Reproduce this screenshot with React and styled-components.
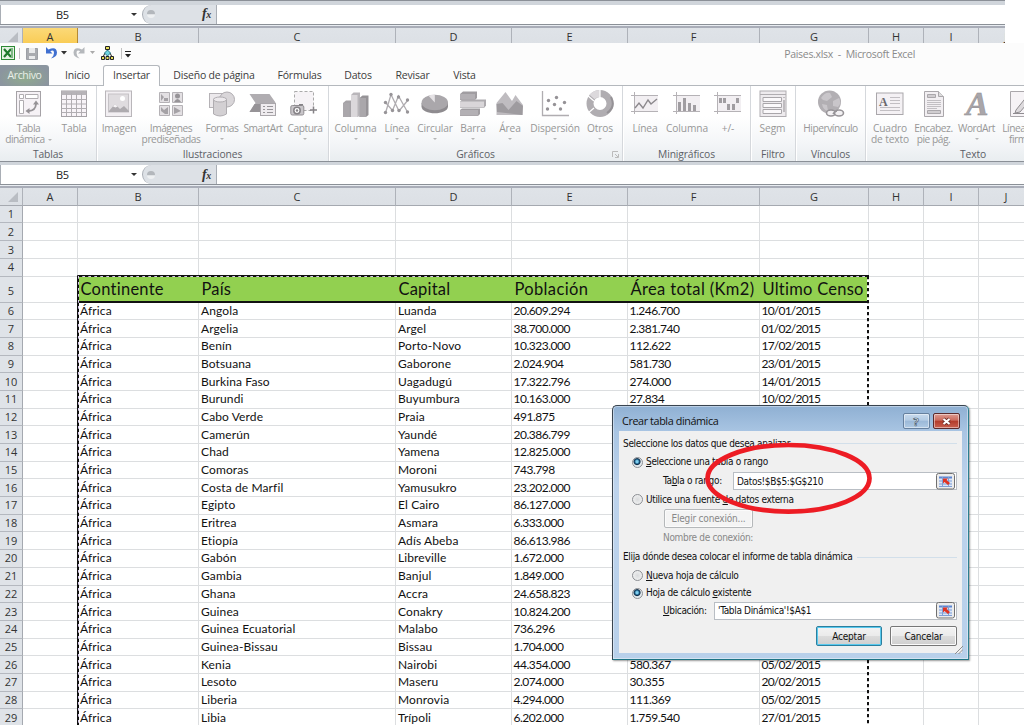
import React from "react";
import styled, {createGlobalStyle} from "styled-components";

const GlobalStyle = createGlobalStyle`
  body {
    margin: 0;
    background: #fff;
    font-family: "Open Sans", "Noto Sans", sans-serif;
  }
  * { box-sizing: border-box; }
`;

const Page = styled.div`
  position: relative;
  width: 1024px;
  height: 725px;
  overflow: hidden;
  background: #fff;
`;

/* ---------- formula bar ---------- */

const Strip = styled.div`
  width: ${props => props.w}px;
  height: 43px;
  overflow: hidden;
`;
const BarTop = styled.div`
  height: ${props => props.h}px;
  background: #d0d5db;
  border-top: 1px solid #8b9097;
`;
const Bar = styled.div`
  display: flex;
  height: 19px;
  background: #fff;
  border-left: 1px solid #a9aeb5;
`;
const BarBottom = styled.div`
  height: 4px;
  background: #e9edf2;
  border-top: 1px solid #8b9097;
  border-bottom: 2px solid #a9adb8;
`;
const NameBox = styled.div`
  display: flex;
  align-items: center;
  width: 141px;
  padding: 0 5px 0 55px;
  font-size: 11px;
  letter-spacing: -0.3px;
  color: #222;
  justify-content: space-between;
`;
const FxBox = styled.div`
  display: flex;
  align-items: center;
  justify-content: space-between;
  width: 75px;
  padding: 0 5px 0 4px;
  background: #dde1e6;
  border: 1px solid #a9aeb5;
  border-width: 0 1px 0 1px;
  border-radius: 10px 0 0 10px;
  font: italic bold 14px "Liberation Serif", serif;
  letter-spacing: -0.3px;
  color: #333;
  small { font-size: 10px; }
`;
const Knob = styled.i`
  width: 8px;
  height: 8px;
  border-radius: 50%;
  background: linear-gradient(#b3b7bc 45%, #eef0f2 60%);
`;
const Arrow = styled.i`
  width: 0;
  height: 0;
  border: ${props => props.s || 3}px solid transparent;
  border-top-color: ${props => props.c || "#333"};
  border-bottom: 0;
`;

/* ---------- ribbon ---------- */

const Ribbon = styled.div`
  height: 118px;
  background: #fcfcfc;
`;
const QuickBar = styled.div`
  display: flex;
  height: 22px;
  width: 915px;
  justify-content: space-between;
  svg { display: block; }
`;
const Title = styled.div`
  font-size: 10.5px;
  line-height: 22px;
  letter-spacing: -0.31px;
  white-space: pre;
  color: #8a8a8a;
`;
const Tabs = styled.div`
  display: flex;
  height: 21px;
  border-bottom: 1px solid #b4b8bd;
  font-size: 10.5px;
  line-height: 21px;
  letter-spacing: -0.2px;
  color: #3c3c3c;
`;
const Tab = styled.div`
  width: ${props => props.w}px;
  height: 21px;
  text-align: center;
  white-space: nowrap;
  ${props => props.active && `
    background: #fff;
    border: 1px solid #b4b8bd;
    border-bottom: 0;
    border-radius: 3px 3px 0 0;
    line-height: 19px;
  `}
  ${props => props.file && `
    background: radial-gradient(ellipse at 50% 60%, #8fa88f 10%, #8b959f 75%);
    border-radius: 0 3px 0 0;
    color: #e9efe9;
    margin-right: 3px;
    letter-spacing: -0.4px;
  `}
`;
const Groups = styled.div`
  display: flex;
  height: 76px;
  background: linear-gradient(#fff 40%, #f4f6f8 75%, #e9edf0);
  border-bottom: 1px solid #8b9097;
`;
const Group = styled.div`
  display: flex;
  flex-direction: column;
  flex: none;
  position: relative;
  width: ${props => props.w}px;
  border-right: 1px solid #d5d8dc;
  box-shadow: 1px 0 #fff;
`;
const Tools = styled.div`
  display: flex;
  height: 62px;
`;
const GroupLabel = styled.div`
  height: 14px;
  line-height: 14px;
  font-size: 10.3px;
  letter-spacing: -0.12px;
  text-align: center;
  color: #5c6066;
`;
const Tool = styled.div`
  display: flex;
  flex-direction: column;
  align-items: center;
  flex: none;
  width: ${props => props.w}px;
  padding-top: 4px;
  font-size: 10.2px;
  line-height: 11px;
  letter-spacing: ${props => props.tight ? -0.45 : -0.12}px;
  color: #979797;
  white-space: nowrap;
  svg { display: block; flex: none; margin-bottom: 5px; }
`;
const Caption = styled.span`
  display: flex;
  align-items: center;
  gap: 3px;
`;
const MenuArrow = styled(Arrow)`
  margin-top: 4px;
`;
const Launcher = styled.svg`
  position: absolute;
  right: 3px;
  bottom: 3px;
`;

/* ---------- sheet ---------- */

const Row = styled.div`
  display: flex;
  height: ${props => props.h}px;
`;
const ColHead = styled.div`
  flex: none;
  width: ${props => props.w}px;
  height: ${props => props.h || 18}px;
  background: ${props => props.hot ? "linear-gradient(#fbd978, #f9cb52)" : "linear-gradient(#dfe3e8, #dce0e5)"};
  border-right: 1px solid ${props => props.hot ? "#b58a35" : "#aeb2b9"};
  border-bottom: 1px solid #a5a9b0;
  font-size: 11px;
  line-height: 17px;
  text-align: center;
  color: #333;
`;
const Corner = styled(ColHead)`
  padding: 4px 0 0 8px;
`;
const RowHead = styled.div`
  display: flex;
  align-items: center;
  justify-content: center;
  flex: none;
  width: 23px;
  background: #dfe3e8;
  border-right: 1px solid #a5a9b0;
  border-bottom: 1px solid #b4b8bf;
  font-size: 11px;
  line-height: 14px;
  padding-top: ${props => props.pad || 0}px;
  color: #333;
`;
const spacing = {number: -0.48, date: -0.78};
const Cell = styled.div`
  display: flex;
  align-items: center;
  flex: none;
  width: ${props => props.w}px;
  padding-left: ${props => props.kind ? 1.5 : 2}px;
  border-right: 1px solid #dcdee0;
  border-bottom: 1px solid #dcdee0;
  font: 12px/16px Lato, sans-serif;
  letter-spacing: ${props => spacing[props.kind] || 0.12}px;
  white-space: nowrap;
  color: #111;
`;
const HeadCell = styled(Cell)`
  padding: 1px 0 0 2.5px;
  background: #92d050;
  border-right: 0;
  border-bottom: 2px solid #111;
  font-size: 16.5px;
  letter-spacing: ${props => props.ls || 0}px;
`;
/* the moving border of the copied range, it lies over the cells */
const Ants = styled.svg`
  position: absolute;
  left: 76px;
  top: 274px;
`;

/* ---------- dialog ---------- */

const Dialog = styled.div`
  position: absolute;
  left: 612px;
  top: 405px;
  width: 357px;
  height: 255px;
  padding: 0 6px 6px;
  background: linear-gradient(#8fb0d3, #a9c5e3 26px, #bdd3ec 80px, #b8d0ea);
  border: 1px solid #39444f;
  border-bottom-color: #1c7484;
  border-right-color: #2b7f90;
  border-radius: 5px 5px 0 0;
  font: 10px/14px "DejaVu Sans Condensed", "DejaVu Sans", sans-serif;
  font-stretch: condensed;
  letter-spacing: -0.33px;
  color: #111;
  box-shadow: inset 0 0 0 1px #ffffff66, 1px 1px 2px #0006;
`;
const TitleBar = styled.div`
  display: flex;
  height: 25px;
  padding: 7px 2px 0 3px;
  gap: 3px;
  font: 10.8px/16px "Open Sans", sans-serif;
  letter-spacing: -0.4px;
  span { flex: 1; }
`;
const WinButton = styled.div`
  display: flex;
  align-items: center;
  justify-content: center;
  width: 27px;
  height: 16px;
  border: 1px solid ${props => props.close ? "#5b2a2c" : "#66809e"};
  border-radius: 2px;
  background: ${props => props.close
    ? "linear-gradient(#dc9b92, #cb6a5c 45%, #b33a2a 50%, #c9604f)"
    : "linear-gradient(#c8daed, #b3cbe4 45%, #9bb9d8 50%, #b0cae4)"};
  box-shadow: inset 0 0 0 1px #ffffff77;
`;
const Body = styled.div`
  height: 222px;
  padding: 4px 5px 0 4px;
  background: #f0f0f0;
`;
const Line = styled.div`
  display: flex;
  align-items: center;
  height: ${props => props.h}px;
  padding-left: ${props => props.pad || 0}px;
  white-space: nowrap;
  color: ${props => props.off ? "#888" : "#111"};
  u { text-underline-offset: 1px; }
`;
const Rule = styled.i`
  flex: 1;
  height: 1px;
  margin-left: 5px;
  background: #d2dfea;
`;
const Radio = styled.i`
  width: 11px;
  height: 11px;
  margin-right: 3px;
  border: 1px solid #8c8f94;
  border-radius: 50%;
  background: ${props => props.on
    ? "radial-gradient(circle at 45% 40%, #7fd0f0 0 1px, #17557f 2.4px, #0e2c46 3px, #e4eaee 4px)"
    : "radial-gradient(#d9dbdd, #f6f6f6)"};
`;
const Field = styled.div`
  display: flex;
  align-items: center;
  justify-content: space-between;
  width: ${props => props.w}px;
  height: 18px;
  margin-left: auto;
  padding: 1px 0 0 3px;
  background: #fff;
  border: 1px solid #b9bec4;
  svg { margin-top: -1px; }
`;
const Button = styled.div`
  width: ${props => props.w}px;
  height: ${props => props.h || 20}px;
  border: 1px solid ${props => props.off ? "#b5b8ba" : props.primary ? "#2c7f9e" : "#777"};
  border-radius: 2px;
  background: ${props => props.off ? "#f4f4f4" : "linear-gradient(#f3f3f3, #ebebeb 48%, #dcdcdc 50%, #cfcfcf)"};
  box-shadow: inset 0 0 0 1px ${props => props.primary ? "#58c9ee" : "#fbfbfb"};
  line-height: ${props => (props.h || 21) - 2}px;
  letter-spacing: -0.2px;
  text-align: center;
`;
const Buttons = styled.div`
  display: flex;
  justify-content: flex-end;
  gap: 8px;
  padding-top: 6px;
`;
const Grip = styled.svg`
  position: absolute;
  right: 5px;
  bottom: 5px;
`;
const Mark = styled.svg`
  position: absolute;
  left: 700px;
  top: 438px;
`;

/* ---------- data ---------- */

const columns = [
  ["A", 55], ["B", 121], ["C", 197], ["D", 116], ["E", 116],
  ["F", 132], ["G", 109], ["H", 55], ["I", 55], ["J", 55],
];

const titles = [
  ["Continente", 0.25], ["País", 0.15], ["Capital", 0.2], ["Población", 0.35],
  ["Área total (Km2)", 0.36], ["Ultimo Censo", 0.25],
];

const countries = [
  ["Angola", "Luanda", "20.609.294", "1.246.700", "10/01/2015"],
  ["Argelia", "Argel", "38.700.000", "2.381.740", "01/02/2015"],
  ["Benín", "Porto-Novo", "10.323.000", "112.622", "17/02/2015"],
  ["Botsuana", "Gaborone", "2.024.904", "581.730", "23/01/2015"],
  ["Burkina Faso", "Uagadugú", "17.322.796", "274.000", "14/01/2015"],
  ["Burundi", "Buyumbura", "10.163.000", "27.834", "10/02/2015"],
  ["Cabo Verde", "Praia", "491.875", "", ""],
  ["Camerún", "Yaundé", "20.386.799", "", ""],
  ["Chad", "Yamena", "12.825.000", "", ""],
  ["Comoras", "Moroni", "743.798", "", ""],
  ["Costa de Marfil", "Yamusukro", "23.202.000", "", ""],
  ["Egipto", "El Cairo", "86.127.000", "", ""],
  ["Eritrea", "Asmara", "6.333.000", "", ""],
  ["Etiopía", "Adís Abeba", "86.613.986", "", ""],
  ["Gabón", "Libreville", "1.672.000", "", ""],
  ["Gambia", "Banjul", "1.849.000", "", ""],
  ["Ghana", "Accra", "24.658.823", "", ""],
  ["Guinea", "Conakry", "10.824.200", "", ""],
  ["Guinea Ecuatorial", "Malabo", "736.296", "", ""],
  ["Guinea-Bissau", "Bissau", "1.704.000", "", ""],
  ["Kenia", "Nairobi", "44.354.000", "580.367", "05/02/2015"],
  ["Lesoto", "Maseru", "2.074.000", "30.355", "20/02/2015"],
  ["Liberia", "Monrovia", "4.294.000", "111.369", "05/02/2015"],
  ["Libia", "Trípoli", "6.202.000", "1.759.540", "27/01/2015"],
];
const kinds = [null, null, "number", "number", "date"];

/* ---------- icons, all on a 30x28 box ---------- */

const icons = {
  pivot: <>
    <rect x="2.5" y="1.5" width="24" height="24.5" fill="#f6f2f6" stroke="#a5a2a6"/>
    <path d="M5.500 4.500h4v4h-4zM11.500 4.500h12.500v4H11.500zM5.500 10.500h4v13h-4z" fill="#fff" stroke="#b0adb1"/>
    <path d="M14.500 21q7 0 7.500-7" fill="none" stroke="#959296" strokeWidth="1.800"/>
    <path d="M19 14.500l3-4 3 4zM15.500 18l-4 3 4 3z" fill="#959296"/>
  </>,
  table: <>
    <rect x="2.500" y="1" width="25" height="25.500" fill="#f8f4f8" stroke="#a5a2a6"/>
    <path d="M2.500 1h25v4h-25z" fill="#b7b4b8"/>
    <path d="M2.500 9.500h25M2.500 14h25M2.500 18.500h25M2.500 22.500h25M7.500 3v23M12.500 3v23M17.500 3v23M22.500 3v23" stroke="#b1aeb2" fill="none"/>
  </>,
  image: <>
    <rect x="1.500" y="1" width="26" height="25.500" fill="#f2eff2" stroke="#b9b6ba"/>
    <rect x="4.500" y="4" width="20" height="18" fill="#dfdcdf" stroke="#c5c2c6"/>
    <path d="M5 21l6-7 5 5 4-3 5 5v1H5z" fill="#aeabaf"/>
    <path d="M9 16.500l2-2.500 2.500 2.500-2 1z" fill="#f5f3f5"/>
    <circle cx="18.500" cy="8.500" r="2.500" fill="#fff"/>
  </>,
  clips: <>
    <path d="M3.500 2.500h10v10h-10zM16.500 2.500h10v10h-10zM3.500 15.500h10v10h-10zM16.500 15.500h10v10h-10z" fill="#e3e0e3" stroke="#b5b2b6"/>
    <path d="M5 4l3 3-3 4zM8 8h4v3H8zM5 17l3 3 4-3v7H9l-4-3zM18 17l7 4-7 3z" fill="#a5a2a6"/>
    <circle cx="21.500" cy="6" r="2.500" fill="#979498"/>
    <path d="M18 12q3.500-6 7 0z" fill="#979498"/>
  </>,
  shapes: <>
    <rect x="2.500" y="3.500" width="16" height="14" fill="#ece9ec" stroke="#b5b2b6"/>
    <circle cx="20" cy="9.500" r="7.500" fill="#d9d6d9" stroke="#b0adb1"/>
    <path d="M6.500 9v15q6.500 4 13 0V9z" fill="#d3d0d3" stroke="#b0adb1"/>
    <ellipse cx="13" cy="9.500" rx="6.500" ry="2.500" fill="#ece9ec" stroke="#b0adb1"/>
  </>,
  smart: <>
    <path d="M1.500 4h20l6 8.500-5 9.500H1.500l6-9z" fill="#b0adb1"/>
    <path d="M1.500 22l5-8h16l-5 8z" fill="#969397"/>
    <rect x="12.500" y="13.500" width="15" height="12" fill="#efecef" stroke="#aaa7ab"/>
    <path d="M15 16.500h2m2 0h6M15 19.500h2m2 0h6M15 22.500h2m2 0h6" stroke="#989599"/>
  </>,
  capture: <>
    <rect x="4.500" y="1.500" width="19" height="19" fill="#f6f3f6" stroke="#aaa" strokeDasharray="3 2"/>
    <path d="M23.500 16.500v7M20 20h7" stroke="#858286" strokeWidth="1.500"/>
    <rect x=".8" y="15.500" width="13" height="9.500" rx="1.500" fill="#c9c6ca" stroke="#918e92"/>
    <circle cx="7" cy="20.500" r="3.200" fill="#fff" stroke="#858286" strokeWidth="1.500"/>
    <circle cx="7" cy="20.500" r="1.200" fill="#858286"/>
    <path d="M9 14h4v1.500H9z" fill="#858286"/>
  </>,
  column: <>
    <path d="M2 13l3-2.500h7V27H2z" fill="#a5a2a6"/>
    <path d="M18.500 8l3-2.500h6V25l-2.500 2h-6.500z" fill="#969397"/>
    <path d="M10 5l2.500-2.500h6.500V25l-2 2h-7z" fill="#b9b6ba"/>
    <path d="M10 5h6.500v22H10z" fill="#dbd8db"/>
    <path d="M2 13h6.500v14H2zM18.500 8H25v19h-6.500z" fill="#aaa7ab"/>
  </>,
  line: <>
    <path d="M3.500 23L9 4.500 17 21l9-11M3.500 12.500l7 8L16.500 6l9 16" stroke="#b0adb1" strokeWidth="1.300" fill="none"/>
    <g fill="#979498">
      <circle cx="3.500" cy="22.500" r="1.700"/><circle cx="9" cy="4.500" r="1.700"/><circle cx="17" cy="20.500" r="1.700"/><circle cx="25.500" cy="10" r="1.700"/>
      <circle cx="3.500" cy="12.500" r="1.700"/><circle cx="10.500" cy="20.500" r="1.700"/><circle cx="16.500" cy="7" r="1.700"/><circle cx="25.500" cy="22" r="1.700"/>
    </g>
  </>,
  pie: <>
    <path d="M1.500 13v3.500c0 9 26.500 9 26.500 0V13z" fill="#8e8b8f"/>
    <ellipse cx="14.800" cy="12.500" rx="13.200" ry="7.800" fill="#aaa7ab"/>
    <path d="M14.800 12.500L8.500 5.800q3-1.200 6.300-1.200z" fill="#e5e2e5"/>
  </>,
  bar: <>
    <path d="M2 4l3-2.500h14V8l-2 2H2zM2 20l2-1.500h18V24l-2 2H2z" fill="#a09da1"/>
    <path d="M2 11.500l2-2h24v6L26 18H2z" fill="#aeabaf"/>
    <path d="M2 4h15v5.500H2zM2 20h18v5.500H2z" fill="#b3b0b4"/>
    <path d="M2 11.500h24v6H2z" fill="#d9d6d9"/>
  </>,
  area: <>
    <path d="M1.500 13L10.500 2l6.500 9 3.500-6 7.500 10v10H1.500z" fill="#bfbcc0"/>
    <path d="M1.500 14l6-1 6 7 8-9 6.500 5-1 9L2 22z" fill="#9e9b9f"/>
  </>,
  scatter: <>
    <path d="M2.500 1v24.500H29" stroke="#b0adb1" strokeWidth="1.300" fill="none"/>
    <g fill="#959296">
      <circle cx="8.500" cy="10.500" r="1.700"/><circle cx="16.500" cy="7.500" r="1.700"/><circle cx="24.500" cy="12.500" r="1.700"/>
      <circle cx="7.500" cy="19" r="1.700"/><circle cx="14.500" cy="14.500" r="1.700"/><circle cx="20.500" cy="19" r="1.700"/>
    </g>
  </>,
  donut: <>
    <circle cx="15" cy="13.500" r="10" fill="none" stroke="#b0adb1" strokeWidth="7"/>
    <path d="M7 7q3-3.500 8-3.500" fill="none" stroke="#dcd9dc" strokeWidth="7"/>
    <path d="M15 0v8M2 5l7 6M2 24l7-6" stroke="#fff" strokeWidth="1.200"/>
    <path d="M26 7q5 10-4 16" fill="none" stroke="#959296" strokeWidth="2"/>
  </>,
  sparkLine: <>
    <path d="M4 6h24v15H4z" fill="#f2eff2"/>
    <path d="M1 5.500h27M1 21.500h27M4.500 2v22" stroke="#b5b2b6"/>
    <path d="M5 18l4-5 4 5 5-8 3 4 6-5" fill="none" stroke="#8b888c" strokeWidth="1.400"/>
  </>,
  sparkBar: <>
    <path d="M4 6h24v15H4z" fill="#f2eff2"/>
    <path d="M1 5.500h27M1 21.500h27M4.500 2v22" stroke="#b5b2b6"/>
    <path d="M6 12h3v9H6zM11 8h3v13h-3zM16 13h3v8h-3zM21 15h3v6h-3z" fill="#a09da1"/>
  </>,
  sparkWin: <>
    <path d="M4 6h24v15H4z" fill="#f2eff2"/>
    <path d="M1 5.500h27M1 21.500h27M4.500 2v22" stroke="#b5b2b6"/>
    <path d="M6 8h3v5H6zM10 8h3v5h-3zM14 14h3v6h-3zM19 14h3v6h-3zM23 8h3v5h-3z" fill="#a09da1"/>
  </>,
  slicer: <>
    <rect x="2" y="1" width="26" height="25.500" fill="#eeebee" stroke="#b0adb1"/>
    <path d="M2 4.500h26" stroke="#b0adb1"/>
    <path d="M5 7.500h18.500v4H5zM5 13.500h18.500v4H5zM5 19.500h18.500v4H5z" fill="#fbf9fb" stroke="#a9a6aa"/>
    <path d="M26 7v1m0 2v12" stroke="#8f8c90"/>
  </>,
  link: <>
    <circle cx="13.500" cy="12" r="11.500" fill="#b2afb3"/>
    <path d="M5 8q4-6 9-5l2 4-5 4-4-1zM17 11l6-3q3 5-1 9l-5-1zM6 14l5 1 1 6q-5-1-6-7z" fill="#c9c6ca"/>
    <ellipse cx="15" cy="23" rx="4.500" ry="3" fill="#f3f1f3" stroke="#979498" strokeWidth="1.600"/>
    <ellipse cx="23" cy="23" rx="4.500" ry="3" fill="#f3f1f3" stroke="#979498" strokeWidth="1.600"/>
    <path d="M17 24q2-3 4-3" stroke="#979498" strokeWidth="1.600" fill="none"/>
  </>,
  textBox: <>
    <rect x="1.500" y="3" width="26.500" height="21.500" fill="#f4f1f4" stroke="#aaa7ab"/>
    <text x="4" y="16" fontFamily="Liberation Serif" fontWeight="bold" fontSize="12" fill="#6b686c">A</text>
    <path d="M15 7.500h10M15 10.500h10M15 13.500h10M5 17.500h20M5 20.500h20" stroke="#c2bfc3"/>
  </>,
  header: <>
    <path d="M5.500 1.500h14l5 5v20h-19z" fill="#f2eff2" stroke="#aaa7ab"/>
    <path d="M19.500 1.500v5h5" fill="#ddd" stroke="#aaa7ab"/>
    <path d="M8.500 4.500h8v3h-8zM8.500 20.500h13v3h-13z" fill="#d0cdd0" stroke="#aaa7ab"/>
    <path d="M8 10.500h14M8 12.500h14M8 14.500h14M8 16.500h14M8 18.500h10" stroke="#c2bfc3"/>
  </>,
  wordArt: <text x="4" y="25" fontFamily="Liberation Serif" fontStyle="italic" fontWeight="bold" fontSize="33" textLength="22" lengthAdjust="spacingAndGlyphs" fill="#a9a6aa" stroke="#8d8a8e" strokeWidth=".5">A</text>,
  sign: <>
    <path d="M4.500 1.500h16l5 5v20h-21z" fill="#f6f3f6" stroke="#aaa7ab"/>
    <path d="M10 20L22 5l4 3-12 14-5 1z" fill="#dddadd" stroke="#8f8c90"/>
    <path d="M7 23.500h15" stroke="#8f8c90"/>
  </>,
};

const groups = [
  ["Tablas", 97, [[57, "pivot", "Tabla", "dinámica", true], [34, "table", "Tabla"]]],
  ["Ilustraciones", 232, [
    [44, "image", "Imagen"], [60, "clips", "Imágenes", "prediseñadas"],
    [42, "shapes", "Formas", null, true], [40, "smart", "SmartArt"], [44, "capture", "Captura", null, true],
  ]],
  ["Gráficos", 294, [
    [53, "column", "Columna", null, true], [30, "line", "Línea", null, true], [46, "pie", "Circular", null, true],
    [30, "bar", "Barra", null, true], [44, "area", "Área", null, true],
    [46, "scatter", "Dispersión", null, true], [44, "donut", "Otros", null, true],
  ]],
  ["Minigráficos", 128, [[44, "sparkLine", "Línea"], [40, "sparkBar", "Columna"], [42, "sparkWin", "+/-"]]],
  ["Filtro", 45, [[43, "slicer", "Segm"]]],
  ["Vínculos", 70, [[69, "link", "Hipervínculo"]]],
  ["Texto", 215, [
    [48, "textBox", "Cuadro", "de texto"], [39, "header", "Encabez.", "pie pág."],
    [47, "wordArt", "WordArt", null, true], [41, "sign", "Línea de", "firma"],
  ]],
];
const tightTools = ["pivot", "clips", "smart", "capture", "link", "header", "wordArt", "sign", "shapes"];

const tabs = [
  ["Inicio", 51], ["Insertar", 57], ["Diseño de página", 108], ["Fórmulas", 63],
  ["Datos", 54], ["Revisar", 55], ["Vista", 49],
];

const FormulaBar = ({top}) => (
  <>
    <BarTop h={top}/>
    <Bar>
      <NameBox>B5<Arrow/></NameBox>
      <FxBox><Knob/><span>f<small>x</small></span></FxBox>
    </Bar>
    <BarBottom/>
  </>
);

const Columns = ({hot}) => (
  <Row h={18}>
    <Corner w={23}>
      <svg width="10" height="10" style={{display: "block"}}><path d="M10 0v10H0z" fill="#b9bdc3"/></svg>
    </Corner>
    {columns.map(([name, w]) => <ColHead key={name} w={w} hot={name === hot}>{name}</ColHead>)}
  </Row>
);

const QuickIcons = () => (
  <svg width="140" height="22">
    <rect x="1.500" y="3.500" width="13" height="13" fill="#e6f2e4" stroke="#2c8a35"/>
    <path d="M4 6l7 8M11 6l-7 8" stroke="#1f7a2c" strokeWidth="2.200"/>
    <path d="M12 5v10" stroke="#7db884" strokeWidth="2"/>
    <path d="M19.500 5v11M121.500 5v11" stroke="#c2c2c2"/>
    <path d="M26.500 5.500h11v11h-11z" fill="#a9abb0" stroke="#9c9fa5"/>
    <path d="M29 5h6v5h-6zM29 13h6v3h-6z" fill="#e9eaec"/>
    <path d="M46 4v6.500h6.500l-2.200-2.200q3.700-2 3.700 1.700 0 3-3 5.500 6-1.500 6-6-.5-6.500-8.500-3z" fill="#3f6fd0"/>
    <path d="M61 8h6l-3 3.500z" fill="#333"/>
    <path d="M84.500 4v6.500H78l2.200-2.200q-3.700-2-3.700 1.700 0 3 3 5.500-6-1.500-6-6 .5-6.500 8.500-3z" fill="#b5b8bc"/>
    <path d="M90 8h5l-2.500 3z" fill="#aaa"/>
    <path d="M107.500 6v4M105 10l-2 4M110 10l2 4" stroke="#222"/>
    <path d="M105.500 3.500h4v3h-4zM101.500 13.500h3v3h-3zM106 13.500h3v3h-3zM110.500 13.500h3v3h-3z" fill="#e7e05a" stroke="#222"/>
    <path d="M107.500 7l3 3-3 3-3-3z" fill="#6fd4e2" stroke="#278"/>
    <path d="M125 8.500h6" stroke="#222"/><path d="M125 11h6l-3 3.500z" fill="#222"/>
  </svg>
);

const RangeIcon = () => (
  <svg width="20" height="17">
    <rect x=".5" y=".5" width="18" height="15.500" rx="2" fill="#ececec" stroke="#707070"/>
    <path d="M3 3.500h13v10H3z" fill="#dce6f6"/>
    <path d="M3 3.500h13v2H3z" fill="#5f86cf"/>
    <path d="M3 8h13M3 11h13M3 13.500h13M6.500 4v10M12.500 4v10" stroke="#7f9fd6"/>
    <path d="M7 5.500h5l-1.500 1.500 3.500 3-2 2-3.500-3L7 10.500z" fill="#e03222"/>
  </svg>
);

const PivotDialog = () => (
  <Dialog>
    <TitleBar>
      <span>Crear tabla dinámica</span>
      <WinButton>
        <svg width="9" height="11"><text x="1.500" y="9.500" fontFamily="Open Sans" fontWeight="bold" fontSize="11" fill="#fff" stroke="#455a70" strokeWidth=".7">?</text></svg>
      </WinButton>
      <WinButton close>
        <svg width="11" height="9"><path d="M2.500 2l6 5M8.500 2l-6 5" stroke="#6b2a26" strokeWidth="3.600"/><path d="M2.500 2l6 5M8.500 2l-6 5" stroke="#fff" strokeWidth="2.200"/></svg>
      </WinButton>
    </TitleBar>
    <Body>
      <Line h={17}>Seleccione los datos que desea analizar<Rule/></Line>
      <Line h={20} pad={9}><Radio on/><span><u>S</u>eleccione una tabla o rango</span></Line>
      <Line h={18} pad={40}><span>Ta<u>b</u>la o rango:</span><Field w={224}>Datos!$B$5:$G$210<RangeIcon/></Field></Line>
      <Line h={19} pad={9}><Radio/><span>Utilice una fuente <u>d</u>e datos externa</span></Line>
      <Line h={19} pad={41} off><Button w={89} h={19} off>Elegir conexión...</Button></Line>
      <Line h={20} pad={40} off>Nombre de conexión:</Line>
      <Line h={18}>Elija dónde desea colocar el informe de tabla dinámica<Rule/></Line>
      <Line h={19} pad={9}><Radio/><span><u>N</u>ueva hoja de cálculo</span></Line>
      <Line h={16} pad={9}><Radio on/><span>Hoja de cálculo <u>e</u>xistente</span></Line>
      <Line h={19} pad={40}><span><u>U</u>bicación:</span><Field w={243}>'Tabla Dinámica'!$A$1<RangeIcon/></Field></Line>
      <Buttons>
        <Button w={66} primary>Aceptar</Button>
        <Button w={67}>Cancelar</Button>
      </Buttons>
    </Body>
    <Grip width="9" height="9"><path d="M1 9l8-8M4.500 9L9 4.500" stroke="#8d8d8d"/></Grip>
  </Dialog>
);

const App = () => {
  const widths = columns.map(c => c[1]);
  return (
    <Page>
      <GlobalStyle/>
      <Strip w={1005}>
        <FormulaBar top={4.5}/>
        <Columns hot="A"/>
      </Strip>
      <Ribbon>
        <QuickBar>
          <QuickIcons/>
          <Title>Paises.xlsx  -  Microsoft Excel</Title>
        </QuickBar>
        <Tabs>
          <Tab w={49} file>Archivo</Tab>
          {tabs.map(([name, w]) => <Tab key={name} w={w} active={name === "Insertar"}>{name}</Tab>)}
        </Tabs>
        <Groups>
          {groups.map(([label, w, tools]) => (
            <Group key={label} w={w}>
              <Tools>
                {tools.map(([tw, icon, a, b, menu]) => (
                  <Tool key={icon} w={tw} tight={tightTools.includes(icon)}>
                    <svg width="30" height="28">{icons[icon]}</svg>
                    {a}
                    {b && <Caption>{b}{menu && <Arrow s={2.5} c="#b5b5b5"/>}</Caption>}
                    {!b && menu && <MenuArrow s={2.5} c="#b5b5b5"/>}
                  </Tool>
                ))}
              </Tools>
              <GroupLabel>{label}</GroupLabel>
              {label === "Gráficos" && <Launcher width="7" height="7"><path d="M.5 6V.5H6M3 3l3 3M6.500 3v3.500H3" stroke="#bbb" fill="none"/></Launcher>}
            </Group>
          ))}
        </Groups>
      </Ribbon>
      <FormulaBar top={4}/>
      <Columns/>
      {[17, 18, 18, 17.5].map((h, i) => (
        <Row key={i} h={h}>
          <RowHead>{i + 1}</RowHead>
          {widths.map((w, c) => <Cell key={c} w={w}/>)}
        </Row>
      ))}
      <Row h={26}>
        <RowHead pad={4}>5</RowHead>
        <Cell w={55}/>
        {titles.map(([name, ls], i) => <HeadCell key={name} w={widths[i + 1]} ls={ls}>{name}</HeadCell>)}
        {[7, 8, 9].map(c => <Cell key={c} w={widths[c]}/>)}
      </Row>
      {countries.map((row, i) => (
        <Row key={row[0]} h={17.7}>
          <RowHead>{i + 6}</RowHead>
          <Cell w={55}/>
          <Cell w={121}>África</Cell>
          {row.map((value, c) => <Cell key={c} w={widths[c + 2]} kind={kinds[c]}>{value}</Cell>)}
          {[7, 8, 9].map(c => <Cell key={c} w={widths[c]}/>)}
        </Row>
      ))}
      <Ants width="796" height="452">
        <path d="M1.500 452V1.500H793" fill="none" stroke="#111"/>
        <path d="M2.500 452V2.500H792" fill="none" stroke="#d8c8ec"/>
        <path d="M2.500 452V2.500H792" fill="none" stroke="#111" strokeDasharray="3.300 2.700"/>
        <path d="M792 2v450" fill="none" stroke="#fff" strokeWidth="2"/>
        <path d="M792 2v450" fill="none" stroke="#111" strokeWidth="2" strokeDasharray="3.300 2.700"/>
      </Ants>
      <PivotDialog/>
      <Mark width="180" height="80">
        <ellipse cx="88.500" cy="40.300" rx="81" ry="33.300" fill="none" stroke="#ed1c24" strokeWidth="4.700"/>
      </Mark>
    </Page>
  );
};

export default App;
